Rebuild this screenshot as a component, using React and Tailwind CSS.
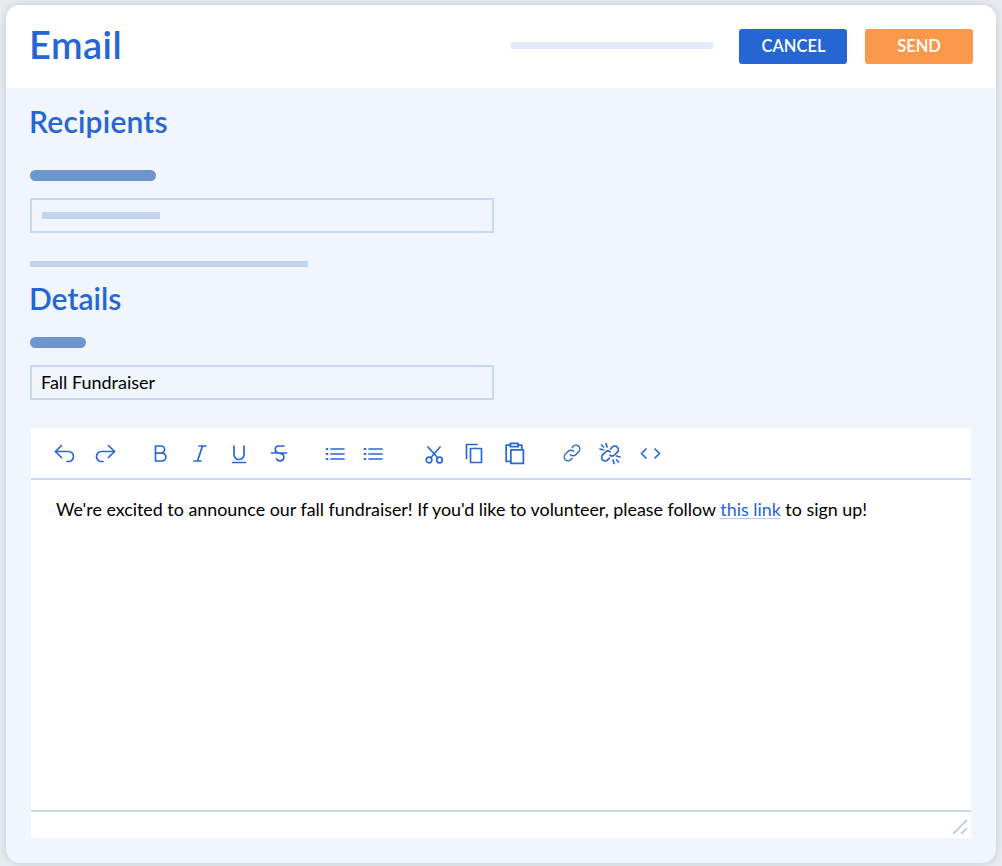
import React from "react";

const Icon = ({ children, w = "w-10", size = 24 }) => (
  <span className={`${w} h-10 flex items-center justify-center shrink-0`}>
    <svg
      width={size}
      height={size}
      viewBox="0 0 24 24"
      fill="none"
      stroke="#2a68d4"
      strokeWidth="1.7"
      strokeLinecap="round"
      strokeLinejoin="round"
    >
      {children}
    </svg>
  </span>
);

const ListLines = () => (
  <>
    <path d="M8 8H21M8 13H21M8 18H21" />
    <path d="M3.500 8h1M3.500 13h1M3.500 18h1" strokeWidth="1.800" />
  </>
);

const Toolbar = () => (
  <div className="h-[52px] shrink-0 flex items-center pl-[14px] border-b-2 border-[#cbdaf1]">
    <Icon>
      <path d="M8.500 4.500 2.500 10.500l6 6" />
      <path d="M2.500 10.500H15.500a5 5 0 0 1 0 10H14" />
    </Icon>
    <Icon>
      <path d="M15.500 4.500l6 6-6 6" />
      <path d="M21.500 10.500H8.500a5 5 0 0 0 0 10H10" />
    </Icon>
    <div className="w-[15px]" />
    <Icon>
      <path d="M7.500 5h5.500a3.600 3.600 0 0 1 0 7.200H7.500zM7.500 12.200h6.500a3.900 3.900 0 0 1 0 7.800H7.500z" />
    </Icon>
    <Icon w="w-[39px]">
      <path d="M11 5h7M6 20h7M14.500 5 9.500 20" />
    </Icon>
    <Icon>
      <path d="M7 5V13.500a5 5 0 0 0 10 0V5M5.500 21.500h13" />
    </Icon>
    <Icon w="w-[39px]">
      <path d="M4.500 12h15M17 5H11.500a3.400 3.400 0 0 0-1 6.600l3.500 1a3.700 3.700 0 0 1-1 7.300 3.800 3.800 0 0 1-3.500-1.900" />
    </Icon>
    <div className="w-[18px]" />
    <Icon w="w-[38px]"><ListLines /></Icon>
    <Icon w="w-[38px]"><ListLines /></Icon>
    <div className="w-[22px]" />
    <Icon>
      <circle cx="7" cy="19" r="2.800" />
      <circle cx="17.500" cy="19" r="2.800" />
      <path d="M8.800 16.800 18 6M15.700 16.800 6 6" />
    </Icon>
    <Icon>
      <path d="M4.500 17.500V3.500h10.500" />
      <path d="M8.500 7.500h11V21.500H8.500z" />
    </Icon>
    <Icon size={25}>
      <path d="M8 19.500H4V4H8" />
      <path d="M15.500 4H19V8" />
      <path d="M8 2.200h7.500V5.500H8z" />
      <path d="M8.500 8.500H20.500V21.500H8.500z" />
    </Icon>
    <div className="w-5" />
    <Icon w="w-9" size={20}>
      <path d="M10 14a4.500 4.500 0 0 0 6.500 0l3.500-3.500a4.500 4.500 0 0 0-6.500-6.500l-1.500 1.500" />
      <path d="M14 10a4.500 4.500 0 0 0-6.500 0L4 13.500a4.500 4.500 0 0 0 6.500 6.500l1.500-1.500" />
    </Icon>
    <Icon>
      <path d="M12.500 8l1.800-1.800a3.500 3.500 0 0 1 5 5L16.500 14a3.500 3.500 0 0 1-4.500.3" />
      <path d="M11.500 17l-1.800 1.800a3.500 3.500 0 0 1-5-5L7.500 11a3.500 3.500 0 0 1 4.500-.3" />
      <path d="M8 2.500 9 6M2 8l3.500 1M16 22.500l-1-3.500M22 16l-3.500-1M3.500 4l2 2M20.500 21l-2-2" />
    </Icon>
    <Icon w="w-10">
      <path d="M8 8 3.500 12.500 8 17M17 8 21.500 12.500 17 17" />
    </Icon>
  </div>
);

const Field = ({ children }) => (
  <div className="h-[35px] w-[464px] border-2 border-[#c9d8f0] flex items-center px-[10px]">
    {children}
  </div>
);

export default function App() {
  return (
    <div className="w-[1002px] h-[866px] bg-[#e7ebef] pt-[5px] px-[6px] overflow-hidden font-['Lato',sans-serif]">
      <div className="w-[990px] h-[858px] rounded-[14px] bg-[#f1f5fd] overflow-hidden flex flex-col shadow-[0_0_6px_rgba(120,135,150,0.35)]">
        <header className="h-[83px] bg-white shrink-0 flex items-center pl-6 pr-[23px]">
          <h1 className="-ml-px mb-[5px] text-[38px] leading-none font-semibold tracking-[0.5px] text-[#2665d4]">Email</h1>
          <div className="ml-auto mb-[2px] w-[202px] h-[7px] bg-[#e2ebf8]" />
          <button className="ml-[26px] w-[108px] h-[35px] rounded-[3px] bg-[#2665d4] text-white text-[16.5px] font-semibold pl-px">
            CANCEL
          </button>
          <button className="ml-[18px] w-[108px] h-[35px] rounded-[3px] bg-[#fa984c] text-white text-[16.5px] font-semibold">
            SEND
          </button>
        </header>

        <main className="flex-1 flex flex-col px-6 min-h-0">
          <h2 className="-ml-px mt-4 h-[34px] text-[30px] leading-[34px] font-semibold tracking-[0.2px] text-[#2665d4]">Recipients</h2>
          <div className="mt-8 w-[126px] h-[11px] rounded-full bg-[#6d96cf]" />
          <div className="mt-[17px]">
            <Field>
              <div className="w-[118px] h-[7px] bg-[#c3d4ed]" />
            </Field>
          </div>
          <div className="mt-7 w-[278px] h-[6px] bg-[#c3d4ed]" />
          <h2 className="-ml-px mt-[14px] h-[34px] text-[30px] leading-[34px] font-semibold text-[#2665d4]">Details</h2>
          <div className="mt-[22px] w-[56px] h-[11px] rounded-full bg-[#6d96cf]" />
          <div className="mt-[17px]">
            <Field>
              <span className="-ml-px text-[18px] text-black">Fall Fundraiser</span>
            </Field>
          </div>

          <section className="mt-7 ml-px w-[940px] h-[410px] bg-white flex flex-col">
            <Toolbar />
            <div className="flex-1 px-[25px] pt-[18px] text-[17.87px] leading-[22px] text-black">
              We're excited to announce our fall fundraiser! If you'd like to volunteer, please follow{" "}
              <a className="text-[#2665d4] underline decoration-[#b4caec] underline-offset-2">this link</a> to sign up!
            </div>
            <div className="h-[28px] shrink-0 border-t-2 border-[#cbd8ec] flex items-end justify-end pr-[3px] pb-[3px]">
              <svg width="16" height="16" viewBox="0 0 16 16" stroke="#bcd0ec" strokeWidth="2" fill="none">
                <path d="M1 15 15 1M9 15l6-6" />
              </svg>
            </div>
          </section>
        </main>
      </div>
    </div>
  );
}
